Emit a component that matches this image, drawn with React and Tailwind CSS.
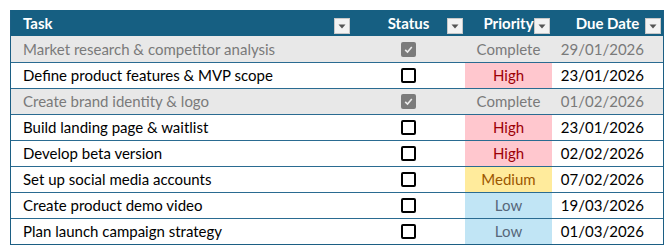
import React from "react";

const tasks = [
  { name: "Market research & competitor analysis", done: true, priority: "Complete", due: "29/01/2026" },
  { name: "Define product features & MVP scope", done: false, priority: "High", due: "23/01/2026" },
  { name: "Create brand identity & logo", done: true, priority: "Complete", due: "01/02/2026" },
  { name: "Build landing page & waitlist", done: false, priority: "High", due: "23/01/2026" },
  { name: "Develop beta version", done: false, priority: "High", due: "02/02/2026" },
  { name: "Set up social media accounts", done: false, priority: "Medium", due: "07/02/2026" },
  { name: "Create product demo video", done: false, priority: "Low", due: "19/03/2026" },
  { name: "Plan launch campaign strategy", done: false, priority: "Low", due: "01/03/2026" },
];

const priorityStyle = {
  Complete: "text-[#7a7a7a]",
  High: "bg-[#ffc7ce] text-[#9c0006]",
  Medium: "bg-[#ffeb9c] text-[#9c5700]",
  Low: "bg-[#c1e5f5] text-[#56677a]",
};

function FilterButton() {
  return (
    <div className="absolute right-[2px] bottom-[2px] w-4 h-4 bg-[#f3f3f3] border border-[#c8c8c8] flex items-center justify-center">
      <svg width="8" height="5" viewBox="0 0 8 5">
        <path d="M0.5 0.5 L7.5 0.5 L4 4.5 Z" fill="#555" />
      </svg>
    </div>
  );
}

function Checkbox({ checked }) {
  if (checked) {
    return (
      <div className="w-[15px] h-[15px] rounded-[2px] bg-[#7b7b7b] flex items-center justify-center">
        <svg width="11" height="11" viewBox="0 0 11 11">
          <path d="M2.2 5.8 L4.5 8 L8.8 3" stroke="#ececec" strokeWidth="1.6" fill="none" />
        </svg>
      </div>
    );
  }
  return <div className="w-[15px] h-[15px] rounded-[2px] border-2 border-black bg-white" />;
}

export default function App() {
  return (
    <div className="pt-[10px] pl-[10px] bg-white min-h-screen" style={{ fontFamily: "Lato, 'Noto Sans', sans-serif" }}>
      <div className="w-[654px] border-x border-b border-[#1c5f84] text-[15px]">
        <div className="grid grid-cols-[341px_113px_87px_111px] h-[26px] bg-[#165f82] text-white font-bold">
          <div className="relative flex items-center pl-3">
            Task
            <FilterButton />
          </div>
          <div className="relative flex items-center justify-center">
            Status
            <FilterButton />
          </div>
          <div className="relative flex items-center justify-center">
            Priority
            <FilterButton />
          </div>
          <div className="relative flex items-center justify-center">
            Due Date
            <FilterButton />
          </div>
        </div>
        {tasks.map((t, i) => (
          <div
            key={i}
            className={`grid grid-cols-[341px_113px_87px_111px] h-[26px] ${i > 0 ? "border-t border-[#2a6b91]" : ""} ${
              t.done ? "bg-[#e8e8e8] text-[#7a7a7a]" : "bg-white text-black"
            }`}
          >
            <div className="flex items-center pl-3 whitespace-nowrap">{t.name}</div>
            <div className="flex items-center justify-center">
              <Checkbox checked={t.done} />
            </div>
            <div className={`flex items-center justify-center ${priorityStyle[t.priority]}`}>{t.priority}</div>
            <div className="flex items-center justify-end pr-[19px]">{t.due}</div>
          </div>
        ))}
      </div>
    </div>
  );
}
